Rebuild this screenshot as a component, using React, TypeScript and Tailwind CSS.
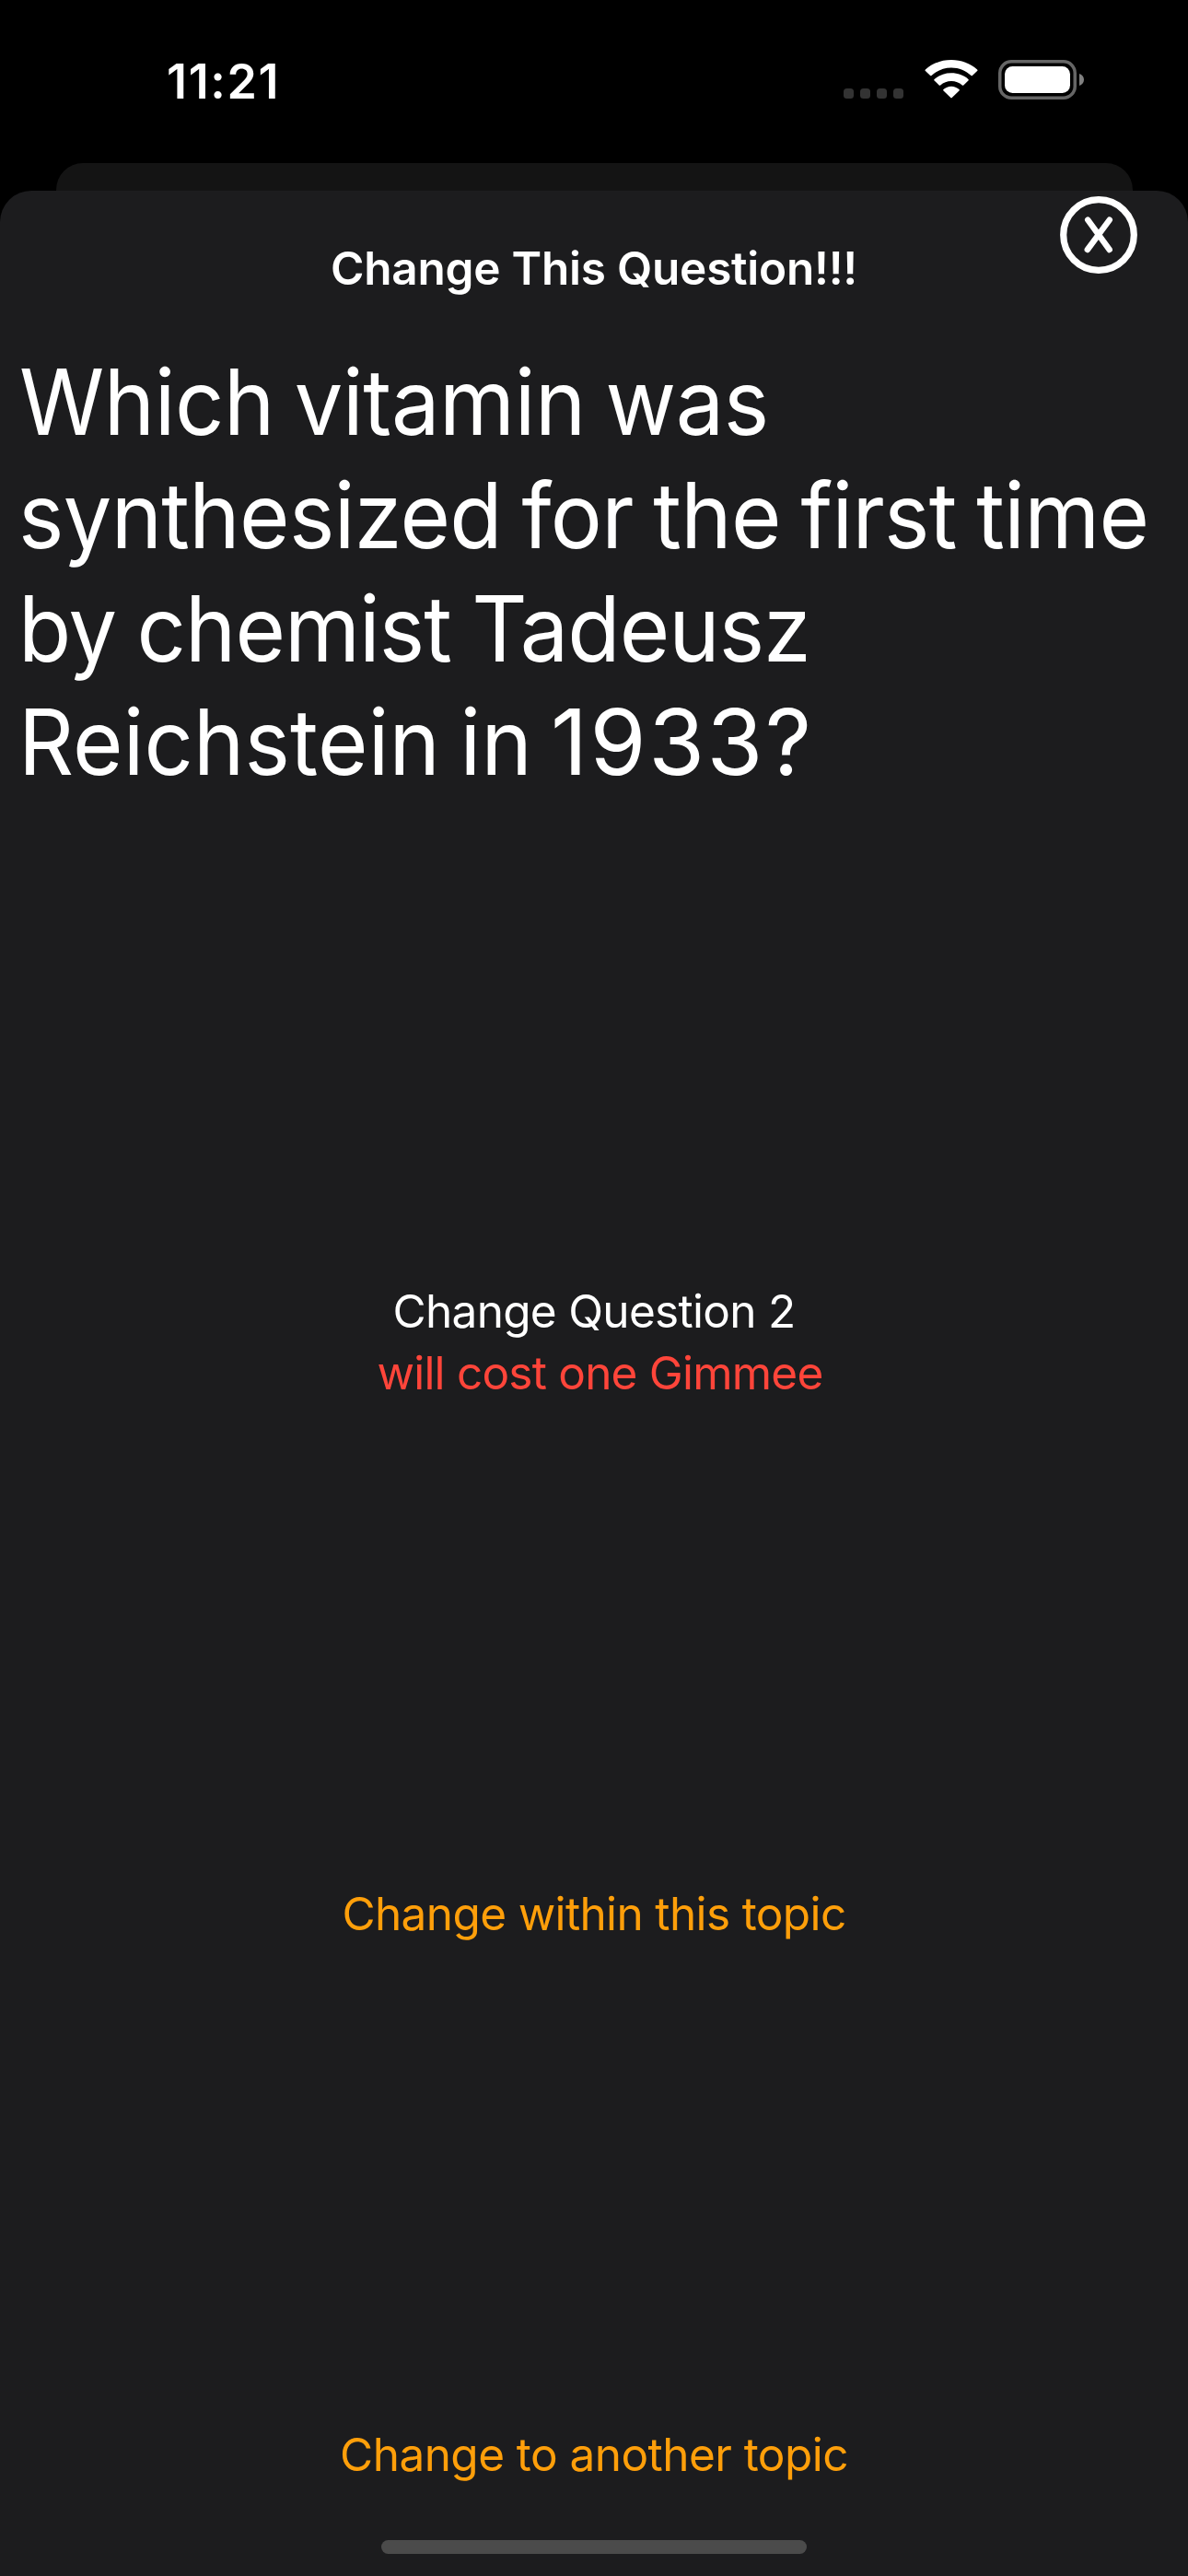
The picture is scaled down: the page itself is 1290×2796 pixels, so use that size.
function StatusIcons() {
  return (
    <div className="flex items-start">
      <div className="mt-[31px] flex gap-[7px]">
        <i className="size-[11px] rounded-[3.5px] bg-[#333333]" />
        <i className="size-[11px] rounded-[3.5px] bg-[#333333]" />
        <i className="size-[11px] rounded-[3.5px] bg-[#333333]" />
        <i className="size-[11px] rounded-[3.5px] bg-[#333333]" />
      </div>
      <svg className="ml-[21.5px]" width="60" height="42" viewBox="0 0 60 42" fill="#fff">
        <path d="M30 8.5c8.300 0 15.900 3.300 21.500 8.500a1 1 0 0 0 1.400 0l5.200-5.100a1 1 0 0 0 0-1.500C50.500 3.700 40.700 0 30 0S9.500 3.700 1.900 10.400a1 1 0 0 0 0 1.500l5.200 5.100a1 1 0 0 0 1.400 0C14.100 11.800 21.700 8.500 30 8.500z" />
        <path d="M30 23c4.500 0 8.600 1.700 11.800 4.500a1.100 1.100 0 0 0 1.500 0l5.100-5.100a1 1 0 0 0 0-1.500C43.500 16.700 37.100 14.300 30 14.300s-13.500 2.400-18.400 6.600a1 1 0 0 0 0 1.500l5.100 5.100a1.100 1.100 0 0 0 1.500 0C21.400 24.700 25.500 23 30 23z" />
        <path d="M38.500 33.500a1 1 0 0 0 0-1.500C36.200 30.100 33.200 28.800 30 28.800s-6.200 1.300-8.500 3.200a1 1 0 0 0 0 1.500l7.800 7.600a1 1 0 0 0 1.400 0z" />
      </svg>
      <svg className="ml-[21.5px]" width="94" height="43" viewBox="0 0 94 43">
        <rect x="1.750" y="1.750" width="81.500" height="39.500" rx="12.500" fill="none" stroke="#666" strokeWidth="3.500" />
        <rect x="7" y="7" width="71" height="29" rx="8.500" fill="#fff" />
        <path d="M88 15c3 1 5 3.500 5 6.500s-2 5.500-5 6.500z" fill="#808080" />
      </svg>
    </div>
  );
}

export default function App() {
  return (
    <main className="flex h-[2796px] w-[1290px] flex-col overflow-hidden bg-black font-['Inter',sans-serif] text-white">
      <header className="flex h-[177px] shrink-0 items-start justify-between pr-[112px] pl-[181px]">
        <time className="mt-[57px] text-[52px] leading-[63px] font-semibold tracking-[1.64px]">11:21</time>
        <div className="mt-[65px]">
          <StatusIcons />
        </div>
      </header>

      {/* Edge of the sheet stacked behind the current one */}
      <div className="mx-[60.5px] h-[30px] shrink-0 rounded-t-[29px] bg-[#141414]" />

      <section className="relative flex flex-1 flex-col items-center rounded-t-[34px] bg-[#1c1c1e]">
        <button aria-label="Close" className="absolute top-[6px] right-[55px]">
          <svg width="84" height="84" viewBox="0 0 84 84" fill="none" stroke="#fff" strokeLinecap="round">
            <circle cx="42" cy="42" r="38.300" strokeWidth="7.200" />
            <path d="M30.200 25.600L53.700 58M53.800 25.600L29.800 58" strokeWidth="6.400" />
          </svg>
        </button>

        <h1 className="mt-[54px] text-[49.5px] leading-[60px] font-semibold tracking-[-0.23px]">
          Change This Question!!!
        </h1>

        <p className="mt-[54px] w-full pl-[20px] text-[98.5px] leading-[123px] whitespace-pre">
          <span className="block origin-left scale-x-95 pl-px tracking-[-0.4px] [word-spacing:-4.5px]">Which vitamin was</span>
          <span className="block origin-left scale-x-95 tracking-[-0.67px] [word-spacing:-4.4px]">synthesized for the first time</span>
          <span className="block origin-left scale-x-95 tracking-[-1px] [word-spacing:-3.2px]">by chemist Tadeusz</span>
          <span className="flex">
            <span className="w-[579px] origin-left scale-x-95 tracking-[0.15px] [word-spacing:-5px]">Reichstein in </span>
            <span className="-ml-px tracking-[2.5px]">1933?</span>
          </span>
        </p>

        <div className="mt-[523px] flex flex-col items-center text-[49.5px] leading-[67px]">
          <span className="tracking-[-0.71px]">Change Question 2</span>
          <span className="ml-[13px] tracking-[-0.78px] text-[#ff453a]">will cost one Gimmee</span>
        </div>

        <button className="mt-[523px] text-[49.5px] leading-[60px] tracking-[-0.63px] text-[#ff9f0a]">
          Change within this topic
        </button>
        <button className="mt-[527px] text-[49.5px] leading-[60px] tracking-[-0.55px] text-[#ff9f0a]">
          Change to another topic
        </button>

        <div className="mt-[63px] h-[15px] w-[462px] rounded-full bg-[#4b4b4b]" />
      </section>
    </main>
  );
}
